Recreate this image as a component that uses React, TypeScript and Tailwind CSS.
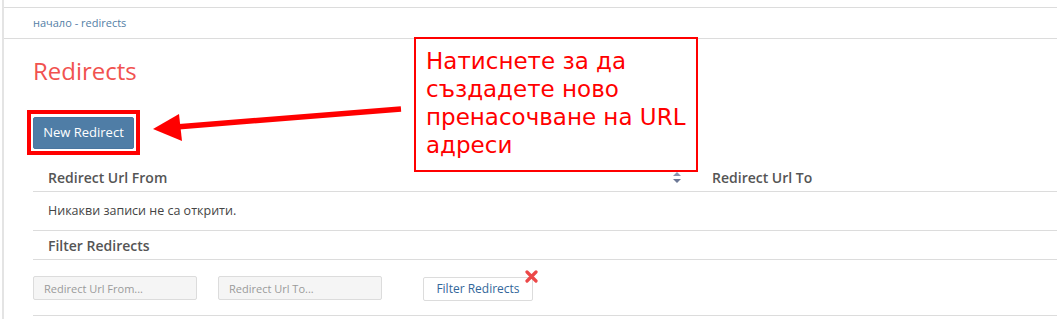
function SortIcon() {
  return (
    <svg width="8" height="11" viewBox="0 0 8 11" aria-hidden>
      <path d="M4 0 L8 4 L0 4 Z" fill="#8a94ad" />
      <path d="M4 11 L8 7 L0 7 Z" fill="#6c7896" />
    </svg>
  );
}

function RemoveIcon() {
  return (
    <svg width="13" height="13" viewBox="0 0 13 13" aria-hidden>
      <path d="M2 2 L11 11 M11 2 L2 11" stroke="#ec4848" strokeWidth="3.2" strokeLinecap="round" />
    </svg>
  );
}

export default function App() {
  return (
    <div className="relative h-[319px] w-[1057px] overflow-hidden bg-white font-['Open_Sans',sans-serif] text-[#555]">
      <div className="ml-[2px] h-full border-l-2 border-[#e4e4e4]">
        <div className="h-[8px] border-b border-[#dcdcdc]" />
        <div className="flex h-[31px] items-center border-b border-[#dcdcdc] pl-[29px] text-[11px] text-[#5480a6]">
          начало - redirects
        </div>

        <div className="pl-[29px]">
          <h1 className="mt-[16px] h-[32px] text-[24px] leading-[32px] font-normal text-[#f1524f]">Redirects</h1>

          <button
            type="button"
            className="mt-[30px] h-[32px] w-[101px] rounded-[2px] border border-[#4a76a0] bg-[#4f7da6] text-[13px] text-white"
          >
            New Redirect
          </button>

          <div className="mt-[14px]">
            <div className="flex h-[29px] items-center border-b border-[#dcdcdc] text-[14px] font-semibold text-[#555]">
              <div className="flex w-[664px] items-center justify-between pl-[15px] pr-[16px]">
                <span>Redirect Url From</span>
                <SortIcon />
              </div>
              <div className="pl-[15px]">Redirect Url To</div>
            </div>
            <div className="flex h-[39px] items-center border-b border-[#dcdcdc] pl-[15px] text-[12.5px] text-[#444]">
              Никакви записи не са открити.
            </div>
            <div className="flex h-[29px] items-center border-b border-[#dcdcdc] pl-[15px] text-[14px] font-semibold text-[#555]">
              Filter Redirects
            </div>
            <div className="flex h-[56px] items-center gap-[21px] border-b border-[#dcdcdc] pt-[1px]">
              <input
                placeholder="Redirect Url From..."
                className="h-[24px] w-[164px] rounded-[2px] border border-[#dcdcdc] bg-[#f5f5f5] px-[10px] text-[11px] text-[#555] placeholder:text-[#9a9a9a] outline-none"
              />
              <input
                placeholder="Redirect Url To..."
                className="h-[24px] w-[164px] rounded-[2px] border border-[#dcdcdc] bg-[#f5f5f5] px-[10px] text-[11px] text-[#555] placeholder:text-[#9a9a9a] outline-none"
              />
              <div className="relative ml-[20px]">
                <button
                  type="button"
                  className="h-[24px] w-[110px] rounded-[2px] border border-[#dcdcdc] bg-white text-[12px] text-[#33679a]"
                >
                  Filter Redirects
                </button>
                <span className="absolute -top-[5px] -right-[5px]">
                  <RemoveIcon />
                </span>
              </div>
            </div>
          </div>
        </div>
      </div>

      {/* highlight around the button */}
      <div className="pointer-events-none absolute left-[27px] top-[110px] h-[45px] w-[113px] border-4 border-[#ff0000]" />

      {/* arrow */}
      <svg className="pointer-events-none absolute left-0 top-0" width="1057" height="319" aria-hidden>
        <line x1="401" y1="109" x2="176" y2="127" stroke="#ff0000" strokeWidth="5.5" />
        <path d="M153 129 L179 114 L182 141 Z" fill="#ff0000" />
      </svg>

      {/* callout */}
      <div className="absolute left-[414px] top-[37px] h-[135px] w-[284px] border-2 border-[#ff0000] bg-white pl-[10px] pt-[8px] font-['DejaVu_Sans',sans-serif] text-[23px] leading-[28px] text-[#ff0000]">
        Натиснете за да
        <br />
        създадете ново
        <br />
        пренасочване на URL
        <br />
        адреси
      </div>
    </div>
  );
}
